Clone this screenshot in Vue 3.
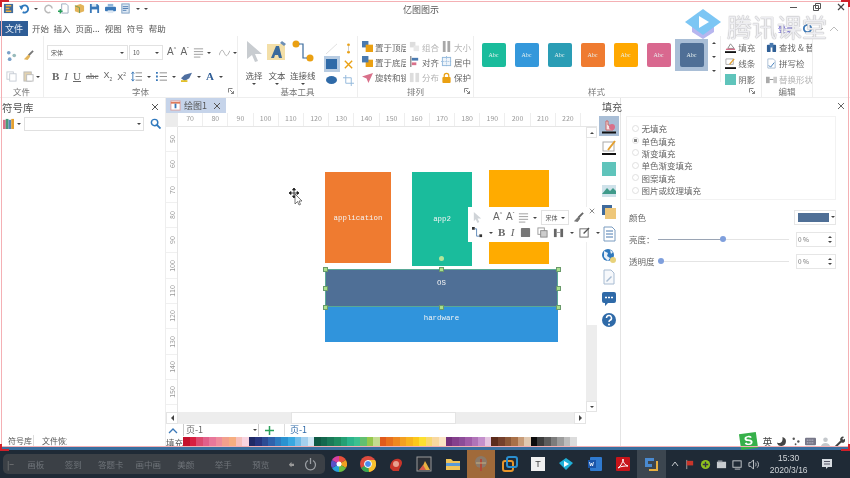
<template>
  <div class="app">
    <!-- 标题栏 -->
    <div class="titlebar">
      <div class="quick">
        <svg class="ic" viewBox="0 0 12 12"><rect x="1" y="1" width="10" height="10" fill="#3f6a9c"/><path d="M3 3h6M3 6h4M3 9h6" stroke="#f0b040" stroke-width="1.4"/></svg>
        <svg class="ic" viewBox="0 0 12 12"><path d="M2 6a4 4 0 1 1 2 4" fill="none" stroke="#2f78bd" stroke-width="2"/><path d="M0 3l5 0-2 5z" fill="#2f78bd"/></svg>
        <i class="caret"></i>
        <svg class="ic" viewBox="0 0 12 12"><path d="M10 6a4 4 0 1 0-2 4" fill="none" stroke="#bbb" stroke-width="1.6"/></svg>
        <svg class="ic" viewBox="0 0 12 12"><path d="M4 1h5l2 2v8H4z" fill="#fff" stroke="#9ab"/><path d="M0 9h5M2.500 6.500v5" stroke="#2aa05a" stroke-width="1.500"/></svg>
        <svg class="ic" viewBox="0 0 12 12"><path d="M1 3l6-2 4 2v6l-5 2-5-2z" fill="#e3b45a"/><path d="M1 3l5 2v6" fill="none" stroke="#6d9a5a"/></svg>
        <svg class="ic" viewBox="0 0 12 12"><path d="M1 1h8l2 2v8H1z" fill="#3a78b8"/><rect x="3" y="1" width="5" height="3" fill="#dce8f4"/><rect x="3" y="7" width="6" height="4" fill="#fff"/></svg>
        <svg class="ic" viewBox="0 0 12 12"><rect x="0" y="4" width="12" height="5" rx="1" fill="#3a78b8"/><rect x="3" y="1" width="6" height="3" fill="#8fb6da"/><rect x="3" y="8" width="6" height="3" fill="#dce8f4"/></svg>
        <svg class="ic" viewBox="0 0 12 12"><rect x="2" y="1" width="8" height="10" fill="#dce8f4" stroke="#7a9cc0"/><path d="M3 4h6M3 6h6M3 8h4" stroke="#4a7ab0"/></svg>
        <i class="caret"></i><i class="caret"></i>
      </div>
      <div class="app-name">亿图图示</div>
      <div class="win-ctl">
        <span class="ctl-min"></span>
        <svg width="8" height="8" viewBox="0 0 8 8"><path d="M2.500 .5h5v5h-5zM.5 2.500h5v5h-5z" fill="#fff" stroke="#555"/></svg>
        <svg width="8" height="8" viewBox="0 0 8 8"><path d="M1 1l6 6M7 1l-6 6" stroke="#444" stroke-width="1.200"/></svg>
      </div>
    </div>

    <!-- 菜单 -->
    <div class="menubar">
      <span class="menu-file">文件</span>
      <span class="menu-item active">开始</span>
      <span class="menu-item">插入</span>
      <span class="menu-item">页面...</span>
      <span class="menu-item">视图</span>
      <span class="menu-item">符号</span>
      <span class="menu-item">帮助</span>
      <div class="menu-right">
        <span class="menu-help">登录</span>
        <svg class="ic" viewBox="0 0 12 12"><circle cx="6" cy="6" r="4" fill="none" stroke="#3a78b8" stroke-width="2"/></svg>
        <i class="caret"></i>
        <svg width="10" height="8" viewBox="0 0 10 8"><path d="M1 6l4-4 4 4" fill="none" stroke="#bbb"/></svg>
      </div>
    </div>

    <!-- 功能区 -->
    <div class="ribbon">
      <section class="group g-file">
        <div class="group-body file-grid">
          <svg class="ic" viewBox="0 0 12 12"><circle cx="3" cy="3" r="2" fill="#7aa0c8"/><circle cx="9" cy="6" r="2" fill="#9bb"/><circle cx="4" cy="10" r="2" fill="#7aa0c8"/></svg>
          <svg class="ic" viewBox="0 0 12 12"><path d="M11 1L6 6" stroke="#777" stroke-width="2"/><path d="M6 5l2 2-3 4-4-1z" fill="#e3b45a"/></svg>
          <svg class="ic" viewBox="0 0 12 12"><rect x="1" y="1" width="7" height="8" fill="#fff" stroke="#c6ccd4"/><rect x="4" y="3" width="7" height="8" fill="#fff" stroke="#c6ccd4"/></svg>
          <span class="inline">
            <svg class="ic" viewBox="0 0 12 12"><rect x="1" y="1" width="8" height="10" fill="#e3d3b0" stroke="#bbb"/><rect x="4" y="4" width="7" height="7" fill="#fff" stroke="#bbb"/></svg>
            <i class="caret"></i>
          </span>
        </div>
        <div class="group-label">文件</div>
      </section>

      <section class="group g-font">
        <div class="group-body">
          <div class="font-row">
            <div class="select sel-font"><span>宋体</span><i class="caret"></i></div>
            <div class="select sel-size"><span>10</span><i class="caret"></i></div>
            <span class="glyph a-up">A<sup>^</sup></span>
            <span class="glyph a-down">A<sup>ˇ</sup></span>
            <svg class="ic" viewBox="0 0 12 12"><path d="M1 2h10M1 5h10M1 8h10M1 11h7" stroke="#999"/></svg>
            <i class="caret"></i>
            <svg class="ic wave" viewBox="0 0 12 12"><path d="M0 9c3-8 4-6 6-2s3 3 6-3" fill="none" stroke="#aaa"/></svg>
            <i class="caret"></i>
          </div>
          <div class="font-row second">
            <b class="glyph serif">B</b>
            <i class="glyph serif plain">I</i>
            <u class="glyph serif">U</u>
            <s class="glyph serif small">abc</s>
            <span class="glyph small">X<sub>2</sub></span>
            <span class="glyph small">X<sup>2</sup></span>
            <svg class="ic" viewBox="0 0 12 12"><path d="M5 2h7M5 6h7M5 10h7" stroke="#888"/><path d="M2 1v10M0.500 3L2 1l1.500 2M0.500 9L2 11l1.500-2" fill="none" stroke="#3a78b8"/></svg>
            <i class="caret"></i>
            <svg class="ic" viewBox="0 0 12 12"><path d="M4 2h8M4 6h8M4 10h8" stroke="#888"/><path d="M0 2h2M0 6h2M0 10h2" stroke="#3a78b8" stroke-width="2"/></svg>
            <i class="caret"></i>
            <svg class="ic" viewBox="0 0 12 12"><path d="M0 8l4-4 8-2-3 6-5 3z" fill="#4f6fa0"/><path d="M0 10h7v2H0z" fill="#e3c02a"/></svg>
            <i class="caret"></i>
            <span class="glyph serif blue">A</span>
            <i class="caret"></i>
          </div>
        </div>
        <div class="group-label">字体<svg class="launcher" viewBox="0 0 6 6"><path d="M.5 .5h4M.5 .5v4M2 2l3.500 3.500M5.500 3v2.500H3" fill="none" stroke="#666" stroke-width=".8"/></svg></div>
      </section>

      <section class="group g-basic">
        <div class="group-body basic">
          <div class="big-tool">
            <svg width="20" height="22" viewBox="0 0 20 22"><path d="M3 1l15 13-7 0 3 7-3 1-3-7-5 4z" fill="#c8ccd0"/></svg>
            <span>选择</span><i class="caret"></i>
          </div>
          <div class="big-tool">
            <svg width="22" height="22" viewBox="0 0 22 22"><rect x="1" y="4" width="18" height="16" fill="#f3dfa8"/><path d="M5 18L10 6h3l3 12h-3l-1-3H9l-1 3z" fill="#3a6a9c"/><path d="M16 1l4 3-2 2-4-3z" fill="#6d8fb5"/></svg>
            <span>文本</span><i class="caret"></i>
          </div>
          <div class="big-tool wide">
            <svg width="22" height="22" viewBox="0 0 22 22"><circle cx="4" cy="4" r="3.500" fill="#eaa012"/><circle cx="18" cy="18" r="3.500" fill="#eaa012"/><path d="M7 4h4v14h4" fill="none" stroke="#3a6a9c" stroke-width="1.200"/></svg>
            <span>连接线</span><i class="caret"></i>
          </div>
          <div class="mini-tools">
            <span class="mini"><svg class="ic" viewBox="0 0 12 12"><path d="M0 12L12 1" stroke="#ddd"/></svg></span>
            <span class="mini"><svg class="ic" viewBox="0 0 12 12"><circle cx="6" cy="2" r="1.500" fill="#eaa012"/><circle cx="6" cy="10" r="1.500" fill="#eaa012"/><path d="M6 3v6" stroke="#c9c9c9"/></svg></span>
            <span class="mini on"><span class="rect-ic"></span></span>
            <span class="mini"><svg class="ic" viewBox="0 0 12 12"><path d="M2 2l8 8M10 2l-8 8" stroke="#eaa012" stroke-width="1.500"/></svg></span>
            <span class="mini"><span class="ell-ic"></span></span>
            <span class="mini"><svg class="ic" viewBox="0 0 12 12"><path d="M3 0v9h9M0 3h9v9" fill="none" stroke="#8fb6da"/></svg></span>
          </div>
        </div>
        <div class="group-label">基本工具</div>
      </section>

      <section class="group g-arrange">
        <div class="group-body arrange">
          <div class="arr-col c1">
            <div class="arr-item"><svg class="ic" viewBox="0 0 12 12"><rect x="0" y="0" width="7" height="7" fill="#4a7ab0"/><rect x="4" y="4" width="8" height="8" fill="#eaa012"/></svg><span>置于顶层</span></div>
            <div class="arr-item"><svg class="ic" viewBox="0 0 12 12"><rect x="4" y="4" width="8" height="8" fill="#eaa012"/><rect x="0" y="0" width="7" height="7" fill="#4a7ab0"/></svg><span>置于底层</span></div>
            <div class="arr-item"><svg class="ic" viewBox="0 0 12 12"><path d="M12 1L0 5l5 2 2 5z" fill="#d9708a"/></svg><span>旋转和镜像</span></div>
          </div>
          <div class="arr-col c2">
            <div class="arr-item off"><svg class="ic" viewBox="0 0 12 12"><rect x="1" y="1" width="6" height="6" fill="#ddd"/><rect x="5" y="5" width="6" height="6" fill="#e8e8e8"/></svg><span>组合</span></div>
            <div class="arr-item"><svg class="ic" viewBox="0 0 12 12"><path d="M2 0v12" stroke="#555"/><rect x="3" y="2" width="7" height="3" fill="#4a7ab0"/><rect x="3" y="7" width="5" height="3" fill="#d9708a"/></svg><span>对齐</span></div>
            <div class="arr-item off"><svg class="ic" viewBox="0 0 12 12"><rect x="1" y="1" width="4" height="10" fill="#ddd"/><rect x="7" y="1" width="4" height="10" fill="#ddd"/></svg><span>分布</span></div>
          </div>
          <div class="arr-col c3">
            <div class="arr-item off"><svg class="ic" viewBox="0 0 12 12"><rect x="2" y="0" width="3" height="12" fill="#a8a8a8"/><rect x="7" y="0" width="3" height="12" fill="#a8a8a8"/></svg><span>大小</span></div>
            <div class="arr-item"><svg class="ic" viewBox="0 0 12 12"><rect x="1.500" y="1.500" width="9" height="9" fill="#eef4fa" stroke="#8fb6da"/><path d="M6 0v12M0 6h12" stroke="#8fb6da" stroke-dasharray="1 1"/></svg><span>居中</span></div>
            <div class="arr-item"><svg class="ic" viewBox="0 0 12 12"><path d="M3.500 6V4a2.500 2.500 0 0 1 5 0v2" fill="none" stroke="#eaa012" stroke-width="1.300"/><rect x="1.500" y="5.500" width="9" height="6.500" rx="1" fill="#eaa012"/></svg><span>保护</span></div>
          </div>
        </div>
        <div class="group-label"><svg class="launcher" viewBox="0 0 6 6"><path d="M.5 .5h4M.5 .5v4M2 2l3.500 3.500M5.500 3v2.500H3" fill="none" stroke="#666" stroke-width=".8"/></svg>排列</div>
      </section>

      <section class="group g-style">
        <div class="group-body style-body">
          <div class="swatches">
            <div v-for="(s, i) in styleSwatches" :key="i" class="swatch-wrap" :class="{ on: i === 6 }">
              <div class="swatch" :style="{ background: s }">Abc</div>
            </div>
          </div>
          <div class="swatch-more"><i class="caret up"></i><i class="caret"></i><i class="caret"></i></div>
          <div class="fill-col">
            <div class="arr-item"><svg class="ic" viewBox="0 0 12 12"><path d="M3 7l3-5 4 5z" fill="#fff" stroke="#888"/><path d="M1 8h10" stroke="#d9708a" stroke-width="1.500"/><path d="M0 11h12" stroke="#111" stroke-width="2"/></svg><span>填充</span></div>
            <div class="arr-item"><svg class="ic" viewBox="0 0 12 12"><path d="M1 1h8v6H1z" fill="#fff" stroke="#aaa"/><path d="M10 1L5 7" stroke="#e3a030" stroke-width="1.500"/><path d="M0 11h12" stroke="#111" stroke-width="2"/></svg><span>线条</span></div>
            <div class="arr-item"><span class="shadow-ic"></span><span>阴影</span></div>
          </div>
        </div>
        <div class="group-label style-label"><span>样式</span><svg class="launcher" viewBox="0 0 6 6"><path d="M.5 .5h4M.5 .5v4M2 2l3.500 3.500M5.500 3v2.500H3" fill="none" stroke="#666" stroke-width=".8"/></svg></div>
      </section>

      <section class="group g-edit">
        <div class="group-body edit-col">
          <div class="arr-item"><svg class="ic" viewBox="0 0 12 12"><rect x="1" y="3" width="4" height="8" rx="1" fill="#2f5f96"/><rect x="7" y="3" width="4" height="8" rx="1" fill="#2f5f96"/><rect x="4" y="1" width="4" height="5" fill="#4a7ab0"/></svg><span>查找 &amp; 替</span></div>
          <div class="arr-item"><svg class="ic" viewBox="0 0 12 12"><path d="M2 1h6l2 2v8H2z" fill="#fff" stroke="#a8bcd2"/><path d="M3 8l2 2 4-5" fill="none" stroke="#3a78b8"/></svg><span>拼写检</span></div>
          <div class="arr-item off"><svg class="ic" viewBox="0 0 12 12"><rect x="0" y="3" width="4" height="7" fill="#aaa"/><rect x="8" y="3" width="4" height="7" fill="#ccc"/><path d="M4 6h4" stroke="#888"/></svg><span>替换形状</span></div>
        </div>
        <div class="group-label">编辑</div>
      </section>
    </div>

    <!-- 主区域 -->
    <div class="main">
      <aside class="lib">
        <div class="lib-head"><span>符号库</span><svg class="close" viewBox="0 0 8 8"><path d="M1 1l6 6M7 1l-6 6" stroke="#555"/></svg></div>
        <div class="lib-search">
          <svg class="ic" viewBox="0 0 12 12"><rect x="0" y="2" width="3" height="10" fill="#d9708a"/><rect x="3" y="1" width="3" height="11" fill="#4a9a7a"/><rect x="6" y="2" width="3" height="10" fill="#5a86b8"/><rect x="9" y="1" width="3" height="11" fill="#e3a030"/></svg>
          <i class="caret"></i>
          <div class="lib-input"><i class="caret"></i></div>
          <svg class="ic" viewBox="0 0 12 12"><circle cx="5" cy="5" r="3.500" fill="none" stroke="#2f78bd" stroke-width="1.600"/><path d="M7.500 7.500L11.500 11.500" stroke="#2f78bd" stroke-width="2"/></svg>
        </div>
        <div class="lib-space"></div>
        <div class="lib-tabs"><span class="lib-tab first">符号库</span><span class="lib-tab">文件恢复</span></div>
      </aside>

      <div class="center">
        <div class="doc-tabs">
          <div class="doc-tab">
            <svg class="ic" viewBox="0 0 12 12"><rect x="1" y="1" width="10" height="10" fill="#fff" stroke="#d9a0a0"/><path d="M1 3h10" stroke="#e07a5a" stroke-width="2"/><path d="M6 4v5" stroke="#3a78b8" stroke-width="2"/></svg>
            <span>绘图1</span>
            <svg class="close" viewBox="0 0 8 8"><path d="M1 1l6 6M7 1l-6 6" stroke="#555"/></svg>
          </div>
        </div>
        <div class="work">
          <div class="ruler-row">
            <div class="ruler-corner"></div>
            <div class="ruler-h"><span v-for="n in rulerH" :key="n" class="tick-h">{{ n }}</span></div>
          </div>
          <div class="canvas-row">
            <div class="ruler-v"><span v-for="n in rulerV" :key="n" class="tick-v"><em>{{ n }}</em></span></div>
            <div class="canvas">
              <div class="shape app1">application</div>
              <div class="shape app2">app2</div>
              <div class="shape app3"></div>
              <div class="shape hw">hardware</div>
              <div class="shape os">OS</div>
              <span v-for="(h, i) in handles" :key="i" class="handle" :style="{ left: h[0] + 'px', top: h[1] + 'px' }"></span>
              <span class="rotate-handle"></span>

              <svg class="cursor" width="14" height="20" viewBox="0 0 14 20">
                <path d="M6 1v10M1 6h10M6 1L4.500 3h3zM6 11L4.500 9h3zM1 6l2-1.500v3zM11 6L9 4.500v3z" stroke="#222" fill="#222" stroke-width=".8"/>
                <path d="M7 7l0 10 2.500-2.500L11 18l1.500-.6-1.500-3.400 3 0z" fill="#fff" stroke="#444" stroke-width=".7"/>
              </svg>

              <div class="float-bar">
                <svg class="close-mini" viewBox="0 0 8 8"><path d="M1 1l6 6M7 1l-6 6" stroke="#666"/></svg>
                <div class="float-row">
                  <svg class="ic" viewBox="0 0 12 12"><path d="M2 0l8 7-4 0 2 4-2 1-2-4-2 2z" fill="#d0d4d8"/></svg>
                  <span class="glyph f-gap">A<sup>^</sup></span>
                  <span class="glyph">A<sup>ˇ</sup></span>
                  <svg class="ic" viewBox="0 0 12 12"><path d="M1 2h10M1 5h10M1 8h10M1 11h7" stroke="#999"/></svg>
                  <i class="caret"></i>
                  <div class="select sel-mini"><span>宋体</span><i class="caret"></i></div>
                  <svg class="ic" viewBox="0 0 12 12"><path d="M11 1L6 6" stroke="#666" stroke-width="2"/><path d="M6 5l2 2-3 4-4-1z" fill="#777"/></svg>
                </div>
                <div class="float-row lower">
                  <svg class="ic" viewBox="0 0 12 12"><rect x="0" y="0" width="3" height="3" fill="#333"/><rect x="8" y="8" width="3" height="3" fill="#333"/><path d="M3 2h2v8h3" fill="none" stroke="#5a86b8"/></svg>
                  <i class="caret"></i>
                  <b class="glyph serif">B</b>
                  <i class="glyph serif plain">I</i>
                  <svg class="ic" viewBox="0 0 12 12"><rect x="1" y="1" width="10" height="10" rx="1" fill="#777"/></svg>
                  <svg class="ic" viewBox="0 0 12 12"><rect x="1" y="1" width="7" height="7" fill="#fff" stroke="#999"/><rect x="4" y="4" width="7" height="7" fill="#ccc" stroke="#888"/></svg>
                  <svg class="ic" viewBox="0 0 12 12"><rect x="1" y="2" width="3" height="9" fill="#666"/><rect x="8" y="2" width="3" height="9" fill="#666"/><path d="M4 6h4" stroke="#999"/></svg>
                  <i class="caret"></i>
                  <svg class="ic" viewBox="0 0 12 12"><rect x="1" y="2" width="9" height="9" fill="#fff" stroke="#666"/><path d="M11 1L5 7" stroke="#555" stroke-width="1.500"/></svg>
                  <i class="caret"></i>
                </div>
              </div>
            </div>
            <div class="scroll-v">
              <div class="sb-btn"><i class="caret up"></i></div>
              <div class="sb-thumb-v"></div>
              <div class="sb-track"></div>
              <div class="sb-btn"><i class="caret"></i></div>
            </div>
          </div>
          <div class="scroll-h">
            <div class="sb-btn-h"><i class="tri left"></i></div>
            <div class="sb-track-a"></div>
            <div class="sb-thumb-h"></div>
            <div class="sb-track"></div>
            <div class="sb-btn-h"><i class="tri right"></i></div>
          </div>
        </div>
        <div class="page-row">
          <svg width="10" height="7" viewBox="0 0 10 7"><path d="M1 6l4-4 4 4" fill="none" stroke="#3a78b8" stroke-width="1.300"/></svg>
          <div class="page-sel"><span>页-1</span><i class="caret"></i></div>
          <svg class="plus" width="9" height="9" viewBox="0 0 9 9"><path d="M4.500 0v9M0 4.500h9" stroke="#2aa05a" stroke-width="1.500"/></svg>
          <span class="page-current">页-1</span>
        </div>
        <div class="palette-row">
          <span>填充</span>
          <div class="palette"><i v-for="(c, i) in palette" :key="i" :style="{ background: c }"></i></div>
        </div>
      </div>

      <div class="side">
        <div class="side-strip">
          <span class="strip-btn on"><svg class="ic-l" viewBox="0 0 16 16"><path d="M5 9V3h2v4l5 1v4H5z" fill="#f4e6e6" stroke="#c66"/><circle cx="11" cy="9" r="3" fill="#d9708a"/><path d="M1 14.500h14" stroke="#111" stroke-width="2"/></svg></span>
          <span class="strip-btn"><svg class="ic-l" viewBox="0 0 16 16"><rect x="2" y="2" width="11" height="9" fill="#fff" stroke="#aaa"/><path d="M14 1L7 10" stroke="#e3a030" stroke-width="2"/><path d="M1 14h14" stroke="#111" stroke-width="2"/></svg></span>
          <span class="strip-btn"><span class="shadow-l"></span></span>
          <span class="strip-btn"><svg class="ic-l" viewBox="0 0 16 16"><rect x="1" y="2" width="14" height="12" fill="#cfe2ea"/><path d="M1 11l5-6 3 3 3-3 3 3v3H1z" fill="#3f9a8a"/></svg></span>
          <span class="strip-btn"><svg class="ic-l" viewBox="0 0 16 16"><rect x="1" y="1" width="10" height="10" fill="#3f6a9c"/><rect x="4" y="4" width="11" height="11" fill="#eec77a"/></svg></span>
          <span class="strip-btn"><svg class="ic-l" viewBox="0 0 16 16"><path d="M3 1h8l3 3v11H3z" fill="#fff" stroke="#7a9cc0"/><path d="M5 5h7M5 8h7M5 11h7" stroke="#4a7ab0"/></svg></span>
          <span class="strip-btn"><svg class="ic-l" viewBox="0 0 16 16"><circle cx="7" cy="7" r="6" fill="#2f78bd"/><path d="M3 3l4 2-1 3 3 2-2 3-4-4zM9 2l3 2-2 2z" fill="#e8f0f8"/><circle cx="12" cy="12" r="3" fill="#e8d27a"/></svg></span>
          <span class="strip-btn"><svg class="ic-l" viewBox="0 0 16 16"><path d="M3 1h7l3 3v11H3z" fill="#f6f8fb" stroke="#a8bcd2"/><path d="M5 12l5-5 1 1-5 5z" fill="#a8bcd2"/></svg></span>
          <span class="strip-btn"><svg class="ic-l" viewBox="0 0 16 16"><path d="M1 3a2 2 0 0 1 2-2h10a2 2 0 0 1 2 2v7a2 2 0 0 1-2 2H7l-3 3v-3H3a2 2 0 0 1-2-2z" fill="#2f6aa8"/><path d="M4 6.500h2M7 6.500h2M10 6.500h2" stroke="#fff" stroke-width="1.500"/></svg></span>
          <span class="strip-btn"><svg class="ic-l" viewBox="0 0 16 16"><circle cx="8" cy="8" r="7" fill="#2f6aa8"/><path d="M5.500 6a2.500 2.500 0 1 1 3.500 2.300c-.7.300-1 .7-1 1.700" fill="none" stroke="#fff" stroke-width="1.500"/><circle cx="8" cy="12.500" r="1" fill="#fff"/></svg></span>
        </div>
        <div class="side-panel">
          <div class="side-head"><span>填充</span><svg class="close" viewBox="0 0 8 8"><path d="M1 1l6 6M7 1l-6 6" stroke="#666"/></svg></div>
          <div class="fill-box">
            <div v-for="(t, i) in fillTypes" :key="t" class="radio-row"><span class="radio" :class="{ on: i === 1 }"></span>{{ t }}</div>
          </div>
          <div class="prop-row first"><span>颜色</span><div class="color-pick"><span></span><i class="caret"></i></div></div>
          <div class="prop-row">
            <span class="prop-name">亮度：</span>
            <div class="slider"><span class="thumb mid"></span></div>
            <div class="num"><span>0 %</span><b><i class="caret up"></i><i class="caret"></i></b></div>
          </div>
          <div class="prop-row">
            <span class="prop-name">透明度</span>
            <div class="slider alpha"><span class="thumb start"></span></div>
            <div class="num"><span>0 %</span><b><i class="caret up"></i><i class="caret"></i></b></div>
          </div>
        </div>
      </div>
    </div>

    <!-- 任务栏 -->
    <div class="task-line"></div>
    <div class="taskbar">
      <div class="pill">
        <span class="pill-dash">|−</span>
        <span v-for="t in pillItems" :key="t" class="pill-item">{{ t }}</span>
        <span class="pill-arrow">⬅</span>
        <svg width="13" height="13" viewBox="0 0 13 13"><path d="M4 2.500a5 5 0 1 0 5 0M6.500 0v6" fill="none" stroke="#9a9ea3" stroke-width="1.300"/></svg>
      </div>
      <div class="task-apps">
        <span class="app-slot"><svg class="tk" viewBox="0 0 16 16"><path d="M8 8V0a8 8 0 0 1 6.900 4z" fill="#e8503a"/><path d="M8 8l6.900-4A8 8 0 0 1 15 12z" fill="#f0a020"/><path d="M8 8l7 4a8 8 0 0 1-7 4z" fill="#6cbf40"/><path d="M8 8v8a8 8 0 0 1-7-4z" fill="#28a0d8"/><path d="M8 8L1 12a8 8 0 0 1 0-8z" fill="#5a50c8"/><path d="M8 8L1 4a8 8 0 0 1 7-4z" fill="#d840a0"/><circle cx="8" cy="8" r="2.500" fill="#fff"/></svg></span>
        <span class="app-slot"><svg class="tk" viewBox="0 0 16 16"><circle cx="8" cy="8" r="8" fill="#dd4b3e"/><path d="M8 8L1 12a8 8 0 0 0 8 4z" fill="#34a853"/><path d="M8 4h7a8 8 0 0 1-6 12z" fill="#f8c22e"/><circle cx="8" cy="8" r="3.500" fill="#4a8cf0" stroke="#fff"/></svg></span>
        <span class="app-slot"><svg class="tk" viewBox="0 0 16 16"><path d="M2 12c0-6 4-10 9-9 3 1 4 4 2 7-1 2-2 3-2 5H5z" fill="#c8352a"/><circle cx="8" cy="8" r="3" fill="#e8a090"/></svg></span>
        <span class="app-slot"><svg class="tk" viewBox="0 0 16 16"><rect x="1" y="1" width="14" height="14" fill="#2a2f36" stroke="#999"/><path d="M9 5l5 9H5z" fill="#e8b040"/><path d="M3 14l4-5 3 5z" fill="#d85a4a"/></svg></span>
        <span class="app-slot"><svg class="tk" viewBox="0 0 16 16"><path d="M1 3h5l2 2h7v9H1z" fill="#f0c45a"/><rect x="1" y="7" width="14" height="3" fill="#5a9ad8"/></svg></span>
        <span class="app-slot hot"><svg class="tk" viewBox="0 0 16 16"><circle cx="8" cy="6" r="6" fill="#8a7a6a"/><path d="M8 3v12" stroke="#b04a3a" stroke-width="2"/><path d="M3 7h10" stroke="#c8b080"/></svg></span>
        <span class="app-slot"><svg class="tk" viewBox="0 0 16 16"><rect x="1" y="5" width="10" height="10" rx="2" fill="none" stroke="#e8952a" stroke-width="2"/><rect x="5" y="1" width="10" height="10" rx="2" fill="none" stroke="#2a8fd0" stroke-width="2"/></svg></span>
        <span class="app-slot"><span class="t-tile">T</span></span>
        <span class="app-slot"><svg class="tk" viewBox="0 0 16 16"><path d="M8 2l7 5-7 7-7-7z" fill="#20b0d8"/><path d="M6 5l5 3-5 3z" fill="#fff"/></svg></span>
        <span class="app-slot"><svg class="tk" viewBox="0 0 16 16"><rect x="3" y="1" width="12" height="14" rx="1" fill="#2f7ad0"/><rect x="1" y="4" width="8" height="8" fill="#1a55a8"/><path d="M2.500 6l1 4 1-3 1 3 1-4" fill="none" stroke="#fff" stroke-width=".8"/></svg></span>
        <span class="app-slot"><svg class="tk" viewBox="0 0 16 16"><rect x="1" y="1" width="14" height="14" rx="1" fill="#c8141a"/><path d="M3 12c3-2 5-6 5-9 0 4 2 6 5 7-3 0-7 0-10 2z" fill="none" stroke="#fff"/></svg></span>
        <span class="app-slot cur"><svg class="tk" viewBox="0 0 16 16"><path d="M2 2h9v3H5v3h4v3H2z" fill="#4a8ad0"/><path d="M13 5h2v10H6v-2h7z" fill="#e8b040"/></svg></span>
      </div>
      <div class="tray">
        <svg width="8" height="6" viewBox="0 0 8 6"><path d="M1 5l3-4 3 4" fill="none" stroke="#c8ccd0"/></svg>
        <svg class="ic" viewBox="0 0 12 12"><path d="M3 1v10" stroke="#aaa"/><path d="M3 2h7v5H3z" fill="#c8352a"/></svg>
        <svg class="ic" viewBox="0 0 12 12"><circle cx="6" cy="6" r="5" fill="#8fc21e"/><path d="M3 6h6M6 3v6" stroke="#334" stroke-width="1.500"/></svg>
        <svg class="ic" viewBox="0 0 12 12"><rect x="1" y="3" width="10" height="7" fill="#c8ccd0"/><rect x="2" y="1.500" width="5" height="2" fill="#8a9098"/></svg>
        <svg class="ic" viewBox="0 0 12 12"><rect x="1" y="2" width="9" height="7" fill="none" stroke="#c8ccd0"/><path d="M3 11h6" stroke="#c8ccd0"/></svg>
        <svg class="ic" viewBox="0 0 12 12"><path d="M1 4h2l3-3v10L3 8H1z" fill="none" stroke="#c8ccd0"/><path d="M8 4c1 1 1 3 0 4M10 2.500c2 2 2 5 0 7" fill="none" stroke="#c8ccd0"/></svg>
        <div class="clock"><span>15:30</span><span>2020/3/16</span></div>
        <svg class="note" width="12" height="12" viewBox="0 0 12 12"><path d="M1 1h10v8H7l-2 2V9H1z" fill="#d8dde2"/><path d="M3 3.500h6M3 6h6" stroke="#556"/></svg>
      </div>
    </div>

    <!-- 浮层：水印、输入法、录屏框 -->
    <div class="watermark">
      <svg width="38" height="34" viewBox="0 0 38 34">
        <path d="M8 17l11 6 11-6v7l-11 7-11-7z" fill="#b7b6ef"/>
        <path d="M19 1l18 13-18 13L1 14z" fill="#7cc6f4"/>
        <path d="M15 8l10 6-10 6z" fill="#fff"/>
      </svg>
      <span>腾讯课堂</span>
    </div>
    <div class="ime">
      <span class="ime-s">S</span>
      <span class="ime-en">英</span>
      <svg class="ic" viewBox="0 0 12 12"><path d="M7 1a5 5 0 1 1-6 6c3 2 7 0 6-6z" fill="#444"/></svg>
      <svg class="ic" viewBox="0 0 12 12"><circle cx="3" cy="3" r="1.300" fill="#555"/><circle cx="8" cy="6" r="1.300" fill="#555"/><circle cx="5" cy="9" r="1" fill="#555"/></svg>
      <svg class="ic" viewBox="0 0 12 12"><rect x="0" y="2" width="12" height="8" rx="1" fill="#778"/><path d="M2 4.500h8M2 7.500h8" stroke="#dde" stroke-dasharray="1 1"/></svg>
      <svg class="ic" viewBox="0 0 12 12"><circle cx="6" cy="4" r="2.500" fill="#c4c8cc"/><path d="M1 12c0-6 10-6 10 0z" fill="#c4c8cc"/></svg>
      <svg class="ic" viewBox="0 0 12 12"><path d="M1 11l6-6a3 3 0 0 1 4-4L9 3l1 1 2-1a3 3 0 0 1-4 4l-5 5z" fill="#444"/></svg>
    </div>
    <div class="rec-frame"></div>
    <span class="rec-corner tl"></span>
    <span class="rec-corner tr"></span>
    <span class="rec-corner bl"></span>
    <span class="rec-corner br"></span>
  </div>
</template>

<script setup>
const styleSwatches = ['#1abc9c', '#3498db', '#2a9db5', '#ef7b30', '#ffa800', '#d9688f', '#4f6f96']

const rulerH = []
for (let n = 70; n <= 220; n += 10) rulerH.push(n)
const rulerV = []
for (let n = 50; n <= 150; n += 10) rulerV.push(n)

const fillTypes = ['无填充', '单色填充', '渐变填充', '单色渐变填充', '图案填充', '图片或纹理填充']
const pillItems = ['画板', '签到', '答题卡', '画中画', '美颜', '举手', '预览']

// 控制点坐标，相对画布
const handles = [
  [147, 142], [263, 142], [380, 142],
  [147, 161], [380, 161],
  [147, 180], [263, 180], [380, 180]
]

const palette = [
  '#c3102c', '#d81f40', '#dd4a6e', '#e2608a', '#e8789a', '#ee8c9c', '#f2a08c', '#f6ae80', '#f6c0bc', '#f8d4e0',
  '#1f2a66', '#26357e', '#2c4c94', '#2f62ac', '#2f7cc0', '#2a92d0', '#3aa8e0', '#70bce8', '#a4d0ee', '#d0e6f4',
  '#0f5a44', '#14684e', '#1a7a58', '#1f8c60', '#24a074', '#2cb48c', '#3cc090', '#62c070', '#96c84c', '#c4dc90',
  '#e05a1c', '#e8701e', '#ee8820', '#f4a020', '#f8b41e', '#fcc81c', '#fce030', '#f8d870', '#f8d8a0', '#fae4c4',
  '#74307c', '#84408c', '#8c4c98', '#a05ca8', '#b074b8', '#c490cc', '#e4c4e0',
  '#5c2c1c', '#74402c', '#8c5838', '#a87048', '#c89c78', '#e0c8b0',
  '#0c0c0c', '#3c3c3c', '#5c5c5c', '#7c7c7c', '#9c9c9c', '#bcbcbc', '#dcdcdc'
]
</script>

<style scoped>
.app {
  position: relative;
  width: 850px;
  height: 478px;
  display: flex;
  flex-direction: column;
  overflow: hidden;
  background: #fff;
  color: #666;
  font-family: "Noto Sans CJK SC", "Liberation Sans", sans-serif;
  font-size: 9px;
  filter: blur(0.45px);
}

.ic { width: 11px; height: 11px; flex: none; }
.ic-l { width: 16px; height: 16px; display: block; }

.caret {
  display: inline-block;
  width: 0;
  height: 0;
  flex: none;
  border-left: 2px solid transparent;
  border-right: 2px solid transparent;
  border-top: 2.5px solid #444;
}
.caret.up { border-top: 0; border-bottom: 2.5px solid #444; }

.titlebar {
  height: 21px;
  flex: none;
  display: flex;
  align-items: center;
  position: relative;
  padding: 0 0 0 3px;
}
.quick { display: flex; align-items: center; gap: 4.5px; margin-top: -4px; }
.quick .ic { width: 11px; height: 11px; }
.app-name {
  position: absolute;
  left: 403px;
  top: 3px;
  font-size: 9px;
  color: #555;
}
.win-ctl {
  margin-left: auto;
  width: 60px;
  display: flex;
  align-items: center;
  gap: 16px;
  padding-left: 2px;
  margin-top: -7px;
}
.ctl-min { width: 7px; height: 1px; background: #555; }

.menubar {
  height: 15px;
  flex: none;
  display: flex;
  align-items: center;
  position: relative;
}
.menu-file {
  width: 28px;
  height: 15px;
  line-height: 15px;
  text-align: center;
  background: #2f5d96;
  color: #e8eef6;
  font-size: 9px;
}
.menu-item { font-size: 8.5px; padding: 0 2.5px; color: #555; line-height: 15px; }
.menu-item.active { padding: 0 2px 0 4px; }
.menu-right {
  position: absolute;
  right: 11px;
  top: 2px;
  display: flex;
  align-items: center;
  gap: 6px;
}
.menu-help { color: #5a52c8; font-size: 8px; margin-right: 2px; }

.ribbon {
  height: 62px;
  flex: none;
  display: flex;
  border-bottom: 1px solid #eee;
  box-sizing: border-box;
}
.group {
  display: flex;
  flex-direction: column;
  border-right: 1px solid #eee;
  box-sizing: border-box;
  flex: none;
}
.group-body { height: 49px; box-sizing: border-box; }
.group-label {
  position: relative;
  height: 12px;
  line-height: 12px;
  text-align: center;
  color: #777;
  font-size: 8.5px;
}
.launcher { position: absolute; right: 3px; top: 3px; width: 6px; height: 6px; }

.g-file { width: 44px; }
.file-grid {
  display: grid;
  grid-template-columns: 17px 20px;
  grid-auto-rows: 21px;
  padding: 9px 0 0 6px;
  align-items: center;
}
.inline { display: flex; align-items: center; gap: 2px; }

.g-font { width: 194px; }
.font-row { display: flex; align-items: center; height: 17px; padding: 8px 0 0 3px; gap: 3px; box-sizing: content-box; }
.font-row.second { padding: 7px 0 0 8px; gap: 5px; }
.select {
  display: flex;
  align-items: center;
  justify-content: space-between;
  height: 15px;
  box-sizing: border-box;
  padding: 0 3px;
  background: #fff;
  border: 1px solid #e2e2e2;
  font-size: 6px;
  color: #555;
  flex: none;
}
.sel-font { width: 81px; }
.sel-size { width: 34px; margin-left: -2px; }
.sel-mini { width: 28px; }
.glyph { font-size: 10px; color: #666; font-family: "Liberation Sans", sans-serif; line-height: 1; }
.glyph sup, .glyph sub { font-size: 5px; }
.glyph.serif { font-family: "Liberation Serif", serif; font-size: 11px; }
.glyph.plain { font-style: italic; }
.glyph.small { font-size: 9px; }
.glyph.blue { color: #2f5d96; font-weight: 700; }
.a-up { margin-left: 1px; width: 14px; }
.a-down { width: 13px; }
.wave { margin-left: 5px; }

.g-basic { width: 120px; }
.basic { display: flex; padding: 4px 0 0 6px; }
.big-tool {
  width: 23px;
  display: flex;
  flex-direction: column;
  align-items: center;
  font-size: 8.5px;
  color: #555;
  line-height: 12px;
  margin-right: 2px;
  gap: 7px;
  white-space: nowrap;
}
.big-tool.wide { width: 26px; }
.big-tool .caret { margin-top: -5px; }
.mini-tools {
  display: grid;
  grid-template-columns: 17px 17px;
  grid-auto-rows: 16px;
  margin-left: 6px;
}
.mini { display: flex; align-items: center; justify-content: center; width: 16px; height: 16px; }
.mini.on { background: #b8cce2; }
.rect-ic { width: 11px; height: 10px; background: #2f6aa8; }
.ell-ic { width: 11px; height: 8px; border-radius: 50%; background: #2f6aa8; }

.g-arrange { width: 116px; }
.arrange { display: flex; padding: 3px 0 0 4px; }
.arr-col { display: flex; flex-direction: column; }
.c1 { width: 44px; }
.c2 { width: 32px; margin-left: 3px; }
.c3 { width: 30px; }
.arr-item {
  display: flex;
  align-items: center;
  gap: 2px;
  height: 16px;
  overflow: hidden;
  white-space: nowrap;
  font-size: 8.5px;
  color: #666;
}
.arr-item.off { color: #b4b4b4; }

.g-style { width: 288px; }
.style-body { display: flex; }
.swatches { display: flex; padding: 3px 0 0 3px; width: 235px; box-sizing: border-box; }
.swatch-wrap {
  width: 33px;
  height: 32px;
  display: flex;
  align-items: center;
  justify-content: center;
  flex: none;
}
.swatch-wrap.on { background: #a9bed6; }
.swatch {
  width: 24px;
  height: 24px;
  border-radius: 2px;
  color: #e8f2f0;
  font-size: 6px;
  line-height: 24px;
  text-align: center;
  font-family: "Liberation Serif", serif;
}
.swatch-more {
  width: 12px;
  height: 30px;
  margin-top: 6px;
  display: flex;
  flex-direction: column;
  align-items: center;
  justify-content: space-between;
}
.fill-col {
  width: 41px;
  border-left: 1px solid #eee;
  padding: 3px 0 0 4px;
  box-sizing: border-box;
  height: 46px;
  margin-left: 0;
}
.shadow-ic { width: 11px; height: 11px; background: #5fc4bb; flex: none; }
.style-label { padding-right: 42px; }
.style-label .launcher { right: 6px; }

.g-edit { width: 51px; }
.edit-col { padding: 3px 0 0 4px; }
.edit-col .arr-item { height: 16px; }

.main {
  flex: 1;
  min-height: 0;
  display: grid;
  grid-template-columns: 166px 431px 253px;
}

.lib { display: flex; flex-direction: column; border-right: 1px solid #eee; }
.lib-head {
  height: 18px;
  display: flex;
  align-items: center;
  justify-content: space-between;
  padding: 0 6px 0 2px;
  font-size: 10.5px;
  color: #555;
}
.close { width: 8px; height: 8px; flex: none; }
.lib-search { display: flex; align-items: center; padding: 0 4px 0 3px; gap: 3px; height: 15px; }
.lib-input {
  width: 124px;
  height: 14px;
  box-sizing: border-box;
  border: 1px solid #e0e0e0;
  display: flex;
  align-items: center;
  justify-content: flex-end;
  padding-right: 2px;
  margin-right: 3px;
}
.lib-space { flex: 1; }
.lib-tabs { height: 12px; display: flex; font-size: 8px; color: #555; line-height: 12px; }
.lib-tab { padding-left: 8px; overflow: hidden; white-space: nowrap; width: 25px; }
.lib-tab.first { width: 25px; border-right: 1px solid #ddd; margin-right: 0; }

.center { display: flex; flex-direction: column; min-width: 0; }
.doc-tabs { height: 15px; flex: none; }
.doc-tab {
  width: 60px;
  height: 15px;
  background: #c6d4ea;
  display: flex;
  align-items: center;
  gap: 3px;
  padding-left: 4px;
  box-sizing: border-box;
  color: #555;
  font-size: 9px;
}
.doc-tab .close { margin-left: 3px; }
.work { flex: 1; min-height: 0; display: flex; flex-direction: column; }

.ruler-row { height: 14px; flex: none; display: flex; }
.ruler-corner { width: 12px; background: #ececec; flex: none; }
.ruler-h {
  flex: 1;
  display: flex;
  padding-left: 0;
  border-bottom: 1px solid #e6e6e6;
  box-sizing: border-box;
  overflow: hidden;
}
.tick-h {
  width: 25.2px;
  flex: none;
  font-size: 7px;
  color: #999;
  text-align: center;
  line-height: 11px;
  border-right: 1px solid #eee;
  box-sizing: border-box;
}
.canvas-row { flex: 1; min-height: 0; display: flex; }
.ruler-v {
  width: 12px;
  flex: none;
  border-right: 1px solid #e6e6e6;
  box-sizing: border-box;
  padding-top: 0;
  overflow: hidden;
}
.tick-v {
  height: 25.3px;
  display: flex;
  align-items: center;
  justify-content: center;
  border-bottom: 1px solid #f0f0f0;
  box-sizing: border-box;
}
.tick-v em {
  font-style: normal;
  font-size: 7px;
  color: #999;
  transform: rotate(-90deg);
  display: block;
}
.canvas { position: relative; flex: 1; background: #fff; min-width: 0; }
.shape {
  position: absolute;
  color: #f4f4f4;
  font-family: "Liberation Mono", monospace;
  font-size: 7.4px;
  text-align: center;
  display: flex;
  align-items: center;
  justify-content: center;
}
.app1 { left: 147px; top: 45px; width: 66px; height: 91px; background: #ef7b30; }
.app2 { left: 234px; top: 45px; width: 60px; height: 94px; background: #1abc9c; }
.app3 { left: 311px; top: 43px; width: 60px; height: 94px; background: #ffab00; }
.os {
  left: 147px;
  top: 142px;
  width: 233px;
  height: 38px;
  background: #4f6f96;
  padding-bottom: 10px;
  box-sizing: border-box;
  border: 1px solid #5aa896;
}
.hw {
  left: 147px;
  top: 180px;
  width: 233px;
  height: 35px;
  background: #3094dc;
  padding-bottom: 14px;
  box-sizing: border-box;
}
.handle {
  position: absolute;
  width: 5px;
  height: 5px;
  margin: -2.5px 0 0 -2.5px;
  background: #a8e08c;
  border: .5px solid #6a9a6a;
  box-sizing: border-box;
}
.rotate-handle {
  position: absolute;
  left: 260.5px;
  top: 128.5px;
  width: 5px;
  height: 5px;
  border-radius: 50%;
  background: #b4e69a;
}
.cursor { position: absolute; left: 110px; top: 60px; }
.float-bar {
  position: absolute;
  left: 290px;
  top: 80px;
  width: 128px;
  height: 35px;
  background: #fff;
  z-index: 2;
  padding: 3px 0 0 4px;
  box-sizing: border-box;
}
.close-mini { position: absolute; right: 1px; top: 1px; width: 6px; height: 6px; }
.float-row { display: flex; align-items: center; gap: 4px; height: 15px; }
.float-row.lower { gap: 5.5px; }
.f-gap { margin-left: 6px; }

.scroll-v { width: 11px; flex: none; display: flex; flex-direction: column; background: #fff; }
.sb-btn {
  height: 11px;
  flex: none;
  display: flex;
  align-items: center;
  justify-content: center;
  border: 1px solid #e4e4e4;
  box-sizing: border-box;
  background: #fff;
}
.sb-thumb-v { height: 187px; flex: none; background: #fff; border-left: 1px solid #eee; box-sizing: border-box; }
.sb-track { flex: 1; background: #ededed; }
.scroll-h { height: 12px; flex: none; display: flex; padding-right: 11px; box-sizing: border-box; }
.sb-btn-h {
  width: 12px;
  flex: none;
  display: flex;
  align-items: center;
  justify-content: center;
  border: 1px solid #e4e4e4;
  box-sizing: border-box;
}
.tri { width: 0; height: 0; border-top: 3px solid transparent; border-bottom: 3px solid transparent; }
.tri.left { border-right: 3px solid #444; }
.tri.right { border-left: 3px solid #444; }
.sb-track-a { width: 113px; background: #ededed; flex: none; }
.sb-thumb-h { width: 165px; flex: none; border: 1px solid #e4e4e4; box-sizing: border-box; background: #fff; }

.page-row { height: 12px; flex: none; display: flex; align-items: center; padding-left: 2px; font-size: 9px; color: #666; }
.page-sel {
  width: 76px;
  margin-left: 5px;
  display: flex;
  align-items: center;
  justify-content: space-between;
  border-left: 1px solid #ccc;
  border-right: 1px solid #ccc;
  padding: 0 1px 0 2px;
  box-sizing: border-box;
  line-height: 12px;
}
.plus { margin: 0 5px 0 6px; }
.page-current { color: #2f6aa8; margin-left: 5px; padding-left: 5px; border-left: 1px solid #ddd; line-height: 12px; }
.palette-row { height: 11px; flex: none; display: flex; align-items: center; font-size: 8.5px; color: #555; }
.palette-row span { width: 17px; flex: none; white-space: nowrap; }
.palette { width: 394px; height: 10px; display: flex; flex: none; }
.palette i { flex: 1; display: block; }

.side { display: flex; min-width: 0; }
.side-strip {
  width: 24px;
  flex: none;
  border-right: 1px solid #e4e4e4;
  display: flex;
  flex-direction: column;
  align-items: center;
  padding: 18px 0 0 0;
  box-sizing: border-box;
}
.strip-btn {
  width: 20px;
  height: 20px;
  margin-bottom: 1.6px;
  display: flex;
  align-items: center;
  justify-content: center;
  flex: none;
}
.strip-btn.on { background: #a9bed6; }
.shadow-l { width: 14px; height: 14px; background: #5fc4bb; }
.side-panel { flex: 1; min-width: 0; padding: 0 14px 0 5px; position: relative; }
.side-head { height: 18px; position: relative; }
.side-head span {
  position: absolute;
  left: -24px;
  top: 1px;
  font-size: 10px;
  color: #555;
}
.side-head .close { position: absolute; right: -9px; top: 4px; }
.fill-box {
  border: 1px solid #f2f2f2;
  height: 84px;
  padding: 5px 0 0 5px;
  box-sizing: border-box;
  font-size: 8.5px;
}
.radio-row { display: flex; align-items: center; height: 12.4px; gap: 2.5px; color: #666; }
.radio {
  width: 7px;
  height: 7px;
  border-radius: 50%;
  border: 1px solid #e0e0e0;
  box-sizing: border-box;
  flex: none;
}
.radio.on { background: radial-gradient(circle, #888 0 1.5px, #fff 2px); }
.prop-row {
  display: flex;
  align-items: center;
  justify-content: space-between;
  height: 22px;
  font-size: 8.5px;
  color: #666;
  padding-left: 3px;
}
.prop-row.first { margin-top: 6px; }
.prop-name { width: 29px; flex: none; white-space: nowrap; }
.color-pick {
  width: 42px;
  height: 15px;
  box-sizing: border-box;
  border: 1px solid #e6e6e6;
  display: flex;
  align-items: center;
  gap: 2px;
  padding-left: 3px;
}
.color-pick span { width: 32px; height: 9px; background: #4f6f96; }
.slider { width: 131px; height: 1px; background: #e4e4e4; position: relative; flex: none; }
.thumb {
  position: absolute;
  top: -2.5px;
  width: 6px;
  height: 6px;
  border-radius: 50%;
  background: #7f9fdc;
}
.thumb.mid { left: 62px; }
.slider:not(.alpha)::before {
  content: "";
  position: absolute;
  left: 0;
  top: 0;
  width: 64px;
  height: 1px;
  background: #9aa4b4;
}
.thumb.start { left: 0; }
.num {
  width: 42px;
  height: 15px;
  box-sizing: border-box;
  border: 1px solid #e6e6e6;
  display: flex;
  align-items: center;
  justify-content: space-between;
  padding: 0 3px 0 1px;
  font-size: 6.5px;
  color: #777;
  margin-left: 7px;
}
.num b { display: flex; flex-direction: column; gap: 3px; }

.task-line { height: 3px; flex: none; background: #3a6f9f; }
.taskbar {
  height: 28px;
  flex: none;
  background: #1f2a36;
  display: flex;
  align-items: center;
  position: relative;
}
.pill {
  width: 322px;
  height: 20px;
  margin-left: 3px;
  background: #3b4046;
  border-radius: 5px;
  display: flex;
  align-items: center;
  color: #6f747a;
  font-size: 8.5px;
  box-sizing: border-box;
  padding-left: 4px;
  flex: none;
}
.pill-dash { width: 10px; flex: none; color: #888; }
.pill-item { width: 37.5px; flex: none; text-align: center; white-space: nowrap; }
.pill-arrow { margin: 0 10px 0 9px; color: #999; font-size: 7px; width: 5px; overflow: hidden; }
.task-apps { display: flex; margin-left: 0; height: 100%; }
.app-slot {
  width: 28.4px;
  height: 100%;
  display: flex;
  align-items: center;
  justify-content: center;
  flex: none;
}
.app-slot.hot { background: #a06a3a; }
.app-slot.cur { background: #3c4650; }
.tk { width: 16px; height: 16px; }
.t-tile {
  width: 14px;
  height: 14px;
  background: #f0f0f0;
  color: #444;
  font-size: 9px;
  text-align: center;
  line-height: 14px;
  font-family: "Liberation Sans", sans-serif;
}
.tray { display: flex; align-items: center; gap: 5px; margin-left: 5px; color: #d0d4d8; }
.clock {
  display: flex;
  flex-direction: column;
  align-items: center;
  font-size: 8.5px;
  line-height: 12px;
  font-family: "Liberation Sans", sans-serif;
  width: 50px;
  margin-left: 0;
}
.note { margin-left: 2px; }

.watermark {
  position: absolute;
  left: 684px;
  top: 8px;
  display: flex;
  align-items: center;
  gap: 5px;
}
.watermark span {
  font-size: 25px;
  line-height: 26px;
  color: rgba(244, 244, 248, .9);
  text-shadow: 0 0 1px #aaa, 0 0 1px #aaa;
  letter-spacing: 0;
  margin-top: 2px;
}
.ime {
  position: absolute;
  left: 740px;
  top: 433px;
  display: flex;
  align-items: center;
  gap: 3.5px;
}
.ime-s {
  width: 17px;
  height: 16px;
  background: #36b04a;
  color: #fff;
  font: 700 13px/16px "Liberation Sans", sans-serif;
  text-align: center;
  transform: rotate(-8deg);
  margin-right: 2px;
}
.ime-en { font-size: 10px; color: #444; }
.rec-frame {
  position: absolute;
  left: 1px;
  top: 1px;
  right: 1px;
  height: 446px;
  border: 1px solid #f4b0b4;
  box-sizing: border-box;
  pointer-events: none;
}
.rec-corner { position: absolute; width: 7px; height: 5px; }
.rec-corner.tl { top: 0; left: 0; border-top: 2px solid #d0202a; border-left: 2px solid #d0202a; }
.rec-corner.tr { top: 0; right: 0; border-top: 2px solid #d0202a; border-right: 2px solid #d0202a; }
.rec-corner.bl { top: 444px; left: 0; border-bottom: 2px solid #d0202a; border-left: 2px solid #d0202a; }
.rec-corner.br { top: 444px; right: 0; border-bottom: 2px solid #d0202a; border-right: 2px solid #d0202a; }
</style>

<style>
html, body { margin: 0; padding: 0; overflow: hidden; background: #fff; }
</style>
